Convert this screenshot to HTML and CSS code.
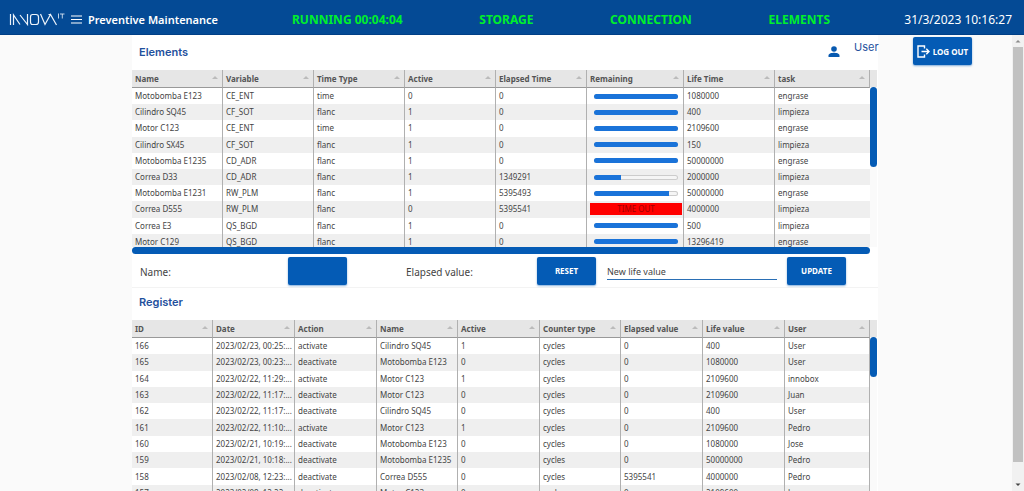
FILE: index.html
```html
<!DOCTYPE html>
<html lang="en">
<head>
<meta charset="utf-8">
<title>Preventive Maintenance</title>
<link rel="stylesheet" href="styles.css">
</head>
<body>
<header class="topbar">
  <svg class="logo" viewBox="0 0 56 16" role="img" aria-label="Innova IT">
    <g fill="none" stroke="#eef4fb" stroke-width="1.200">
      <path d="M1.500 4V15M4.500 15V5L11 14.500M11 5L18.500 14.500V4"/>
      <path d="M23 4.500H27Q29.500 4.500 29.500 7V12Q29.500 14.500 27 14.500H23.500Q21.500 14.500 21.500 12V7Q21.500 4.500 23.500 4.500Z"/>
      <path d="M31.500 4L36 14.500L41.500 4.500L47.500 15M39.500 4.500H42"/>
      <path stroke-width=".8" d="M49.500 3.500V8.500M51 4H55.500M53.300 4V8.500"/>
    </g>
  </svg>
  <button class="menu" type="button" aria-label="Menu">
    <svg viewBox="0 0 11 9"><path d="M0 1H11M0 4.500H11M0 8H11" stroke="#fff" stroke-width="1.200"/></svg>
  </button>
  <h1 class="title">Preventive Maintenance</h1>
  <ul class="status">
    <li>RUNNING 00:04:04</li>
    <li>STORAGE</li>
    <li>CONNECTION</li>
    <li>ELEMENTS</li>
  </ul>
  <time class="clock">31/3/2023 10:16:27</time>
</header>
<div class="page">
  <main class="content">
    <section class="panel">
      <div class="panel-head">
        <h2>Elements</h2>
        <svg class="avatar" viewBox="0 0 12 12"><circle cx="6" cy="3" r="2.800"/><path d="M.5 11V9.500C.5 7.500 4 6.800 6 6.800S11.500 7.500 11.500 9.500V11Z"/></svg>
        <span class="user">User</span>
      </div>
      <div class="grid grid-elements">
        <table>
          <colgroup><col class="c91"><col class="c91"><col class="c91"><col class="c91"><col class="c91"><col class="c97"><col class="c91"><col class="c95"></colgroup>
          <thead><tr><th>Name</th><th>Variable</th><th>Time Type</th><th>Active</th><th>Elapsed Time</th><th>Remaining</th><th>Life Time</th><th>task</th></tr></thead>
          <tbody>
            <tr><td>Motobomba E123</td><td>CE_ENT</td><td>time</td><td>0</td><td>0</td><td><div class="bar"><div class="fill" style="width:100%"></div></div></td><td>1080000</td><td>engrase</td></tr>
            <tr><td>Cilindro SQ45</td><td>CF_SOT</td><td>flanc</td><td>1</td><td>0</td><td><div class="bar"><div class="fill" style="width:100%"></div></div></td><td>400</td><td>limpieza</td></tr>
            <tr><td>Motor C123</td><td>CE_ENT</td><td>time</td><td>1</td><td>0</td><td><div class="bar"><div class="fill" style="width:100%"></div></div></td><td>2109600</td><td>engrase</td></tr>
            <tr><td>Cilindro SX45</td><td>CF_SOT</td><td>flanc</td><td>1</td><td>0</td><td><div class="bar"><div class="fill" style="width:100%"></div></div></td><td>150</td><td>limpieza</td></tr>
            <tr><td>Motobomba E1235</td><td>CD_ADR</td><td>flanc</td><td>1</td><td>0</td><td><div class="bar"><div class="fill" style="width:100%"></div></div></td><td>50000000</td><td>engrase</td></tr>
            <tr><td>Correa D33</td><td>CD_ADR</td><td>flanc</td><td>1</td><td>1349291</td><td><div class="bar"><div class="fill part" style="width:32%"></div></div></td><td>2000000</td><td>limpieza</td></tr>
            <tr><td>Motobomba E1231</td><td>RW_PLM</td><td>flanc</td><td>1</td><td>5395493</td><td><div class="bar"><div class="fill part" style="width:89%"></div></div></td><td>50000000</td><td>engrase</td></tr>
            <tr><td>Correa D555</td><td>RW_PLM</td><td>flanc</td><td>0</td><td>5395541</td><td><div class="timeout">TIME OUT</div></td><td>4000000</td><td>limpieza</td></tr>
            <tr><td>Correa E3</td><td>QS_BGD</td><td>flanc</td><td>1</td><td>0</td><td><div class="bar"><div class="fill" style="width:100%"></div></div></td><td>500</td><td>limpieza</td></tr>
            <tr><td>Motor C129</td><td>QS_BGD</td><td>flanc</td><td>1</td><td>0</td><td><div class="bar"><div class="fill" style="width:100%"></div></div></td><td>13296419</td><td>engrase</td></tr>
          </tbody>
        </table>
        <div class="gutter"><div class="thumb thumb-long"></div></div>
      </div>
      <div class="hscroll"></div>
    </section>
    <form class="controls">
      <span class="label name-label">Name:</span>
      <button class="btn" type="button" aria-label="Select name"></button>
      <span class="label elapsed-label">Elapsed value:</span>
      <button class="btn" type="button">RESET</button>
      <input class="life" type="text" placeholder="New life value" aria-label="New life value">
      <button class="btn" type="button">UPDATE</button>
    </form>
    <section class="panel">
      <div class="panel-head register-head"><h2>Register</h2></div>
      <div class="grid grid-register">
        <table>
          <colgroup><col class="c81"><col class="c82"><col class="c82"><col class="c81"><col class="c82"><col class="c81"><col class="c82"><col class="c82"><col class="c85"></colgroup>
          <thead><tr><th>ID</th><th>Date</th><th>Action</th><th>Name</th><th>Active</th><th>Counter type</th><th>Elapsed value</th><th>Life value</th><th>User</th></tr></thead>
          <tbody>
            <tr><td>166</td><td>2023/02/23, 00:25:...</td><td>activate</td><td>Cilindro SQ45</td><td>1</td><td>cycles</td><td>0</td><td>400</td><td>User</td></tr>
            <tr><td>165</td><td>2023/02/23, 00:23:...</td><td>deactivate</td><td>Motobomba E123</td><td>0</td><td>cycles</td><td>0</td><td>1080000</td><td>User</td></tr>
            <tr><td>164</td><td>2023/02/22, 11:29:...</td><td>activate</td><td>Motor C123</td><td>1</td><td>cycles</td><td>0</td><td>2109600</td><td>innobox</td></tr>
            <tr><td>163</td><td>2023/02/22, 11:17:...</td><td>deactivate</td><td>Motor C123</td><td>0</td><td>cycles</td><td>0</td><td>2109600</td><td>Juan</td></tr>
            <tr><td>162</td><td>2023/02/22, 11:17:...</td><td>deactivate</td><td>Cilindro SQ45</td><td>0</td><td>cycles</td><td>0</td><td>400</td><td>User</td></tr>
            <tr><td>161</td><td>2023/02/22, 11:10:...</td><td>activate</td><td>Motor C123</td><td>1</td><td>cycles</td><td>0</td><td>2109600</td><td>Pedro</td></tr>
            <tr><td>160</td><td>2023/02/21, 10:19:...</td><td>deactivate</td><td>Motobomba E123</td><td>0</td><td>cycles</td><td>0</td><td>1080000</td><td>Jose</td></tr>
            <tr><td>159</td><td>2023/02/21, 10:18:...</td><td>deactivate</td><td>Motobomba E1235</td><td>0</td><td>cycles</td><td>0</td><td>50000000</td><td>Pedro</td></tr>
            <tr><td>158</td><td>2023/02/08, 12:23:...</td><td>deactivate</td><td>Correa D555</td><td>0</td><td>cycles</td><td>5395541</td><td>4000000</td><td>Pedro</td></tr>
            <tr><td>157</td><td>2023/02/08, 12:22:...</td><td>deactivate</td><td>Motor C123</td><td>0</td><td>cycles</td><td>0</td><td>2109600</td><td>Juan</td></tr>
          </tbody>
        </table>
        <div class="gutter"><div class="thumb thumb-short"></div></div>
      </div>
    </section>
  </main>
  <aside class="side">
    <button class="btn logout" type="button">
      <svg viewBox="0 0 13 13"><path d="M7.500 3.500V1H1V12H7.500V9.500M4.500 6.500H12M9.300 3.800L12 6.500L9.300 9.200" fill="none" stroke="#fff" stroke-width="1.400"/></svg>
      LOG OUT
    </button>
  </aside>
  <div class="scrollbar">
    <svg viewBox="0 0 12 12"><path d="M3.500 7.500L6 5L8.500 7.500Z" fill="#8a8a8a"/></svg>
    <div class="scroll-thumb"></div>
    <svg class="down" viewBox="0 0 12 12"><path d="M3.500 4.500L6 7L8.500 4.500Z" fill="#444"/></svg>
  </div>
</div>
</body>
</html>
```
FILE: styles.css
```css
* { box-sizing: border-box; }

body {
  margin: 0;
  height: 100vh;
  display: flex;
  flex-direction: column;
  overflow: hidden;
  background: #fafafa;
  color: #444;
  font-family: "Noto Sans", "Open Sans", sans-serif;
  font-size: 8px;
}

h1, h2, ul { margin: 0; padding: 0; }
button { font-family: inherit; }
svg { display: block; }

.topbar {
  flex: none;
  height: 35px;
  display: flex;
  align-items: center;
  padding: 5px 12px 0 9px;
  background: #044a95;
  border-bottom: 1px solid #003f86;
  font-size: 12px;
  color: #fff;
}
.logo { width: 56px; height: 16px; margin-bottom: 4px; }
.menu {
  width: 11px;
  margin-left: 6px;
  padding: 0;
  border: 0;
  background: none;
}
.menu svg { width: 11px; height: 9px; }
.title {
  width: 210px;
  padding-left: 6px;
  font-size: 11px;
  font-weight: 600;
}
.status {
  flex: 1;
  display: flex;
  justify-content: space-between;
  list-style: none;
  color: #00ef2c;
  font-weight: 700;
}
.clock { width: 182px; text-align: right; }

.page {
  flex: 1;
  min-height: 0;
  display: grid;
  grid-template-columns: 132fr 746fr 134fr 12px;
  grid-template-rows: minmax(0, 1fr);
}
.content { grid-column: 2; min-width: 0; background: #fff; }
.side { padding: 2px 0 0 35px; }

.panel-head {
  height: 35px;
  display: flex;
  align-items: center;
  padding: 0 0 1px 7px;
}
.panel-head h2 {
  flex: 1;
  color: #1f519d;
  font-family: Inter, sans-serif;
  font-size: 11px;
  font-weight: 600;
}
.avatar { width: 12px; height: 12px; margin-right: 14px; fill: #0759b0; }
.user {
  width: 24px;
  margin-bottom: 10px;
  color: #1f519d;
  font-family: Inter, sans-serif;
  font-size: 11px;
}

.grid { display: flex; overflow: hidden; padding-right: 1px; }
.grid-elements { height: 177px; }
table {
  flex: 1;
  min-width: 0;
  width: 100%;
  table-layout: fixed;
  border-collapse: separate;
  border-spacing: 0;
}
.grid-elements table { height: 180px; }
.grid-register table { height: 181px; }
.c81 { width: 81px; }
.c82 { width: 82px; }
.c85 { width: 85px; }
.c91 { width: 91px; }
.c95 { width: 95px; }
.c97 { width: 97px; }

th, td {
  padding: 0 0 0 3px;
  border-right: 1px solid #b0b0b0;
  line-height: 12px;
  text-align: left;
  overflow: hidden;
  white-space: nowrap;
}
td:last-child { border-right: 0; }
.grid-register td:last-child { border-right: 1px solid #b0b0b0; }
th {
  height: 18px;
  background: #e6e6e6;
  border-bottom: 1px solid #999;
  color: #555;
  font-weight: 700;
}
th::after {
  content: "";
  float: right;
  margin: 3px 4px 0 0;
  border: 3px solid transparent;
  border-top: 0;
  border-bottom: 3px solid #bbb;
}
tbody tr:nth-child(even) { background: #efefef; }

.bar {
  height: 5px;
  margin: 0 5px 0 4px;
  border-radius: 3px;
  background: #f5f5f5;
  box-shadow: inset 0 0 0 1px #ccc;
}
.fill {
  height: 5px;
  border-radius: 3px;
  background: #1a73d9;
}
.part { border-radius: 3px 0 0 3px; }
.timeout {
  margin-right: 1px;
  background: #f00;
  color: #a00000;
  text-align: center;
}

.gutter { flex: none; width: 7px; background: #fafafa; }
.gutter::before {
  content: "";
  display: block;
  height: 17px;
  background: #e6e6e6;
}
.thumb { border-radius: 4px; background: #045bb5; }
.thumb-long { height: 80px; }
.thumb-short { height: 40px; }
.hscroll {
  height: 7px;
  margin-right: 8px;
  border-radius: 4px;
  background: #045bb5;
}

.controls {
  height: 34px;
  display: flex;
  align-items: center;
  padding: 0 32px 0 8px;
  border-bottom: 1px solid #f3f3f3;
}
.label { padding-top: 2px; font-size: 10px; }
.name-label { width: 148px; }
.elapsed-label { width: 131px; margin-left: 59px; }
.btn {
  flex: none;
  width: 59px;
  height: 28px;
  padding: 0;
  border: 0;
  border-radius: 2px;
  background: #045bb5;
  box-shadow: 0 1px 2px #045bb580;
  color: #fff;
  font-size: 8px;
  font-weight: 700;
}
.life {
  flex: 1;
  min-width: 0;
  height: 18px;
  margin: 0 10px 0 11px;
  padding: 2px 0 0;
  border: 0;
  border-bottom: 1px solid #2a6fb5;
  background: none;
  font: 9px "Noto Sans", sans-serif;
}
.life::placeholder { color: #444; opacity: 1; }
.register-head { height: 32px; padding-bottom: 4px; }

.logout {
  display: flex;
  align-items: center;
  justify-content: center;
  gap: 3px;
}
.logout svg { width: 13px; height: 13px; }

.scrollbar { display: flex; flex-direction: column; background: #f1f1f1; }
.scrollbar svg { flex: none; width: 12px; height: 12px; }
.scrollbar .down { margin-top: 17px; }
.scroll-thumb { flex: 1; margin: 0 1px; background: #c1c1c1; }
```
